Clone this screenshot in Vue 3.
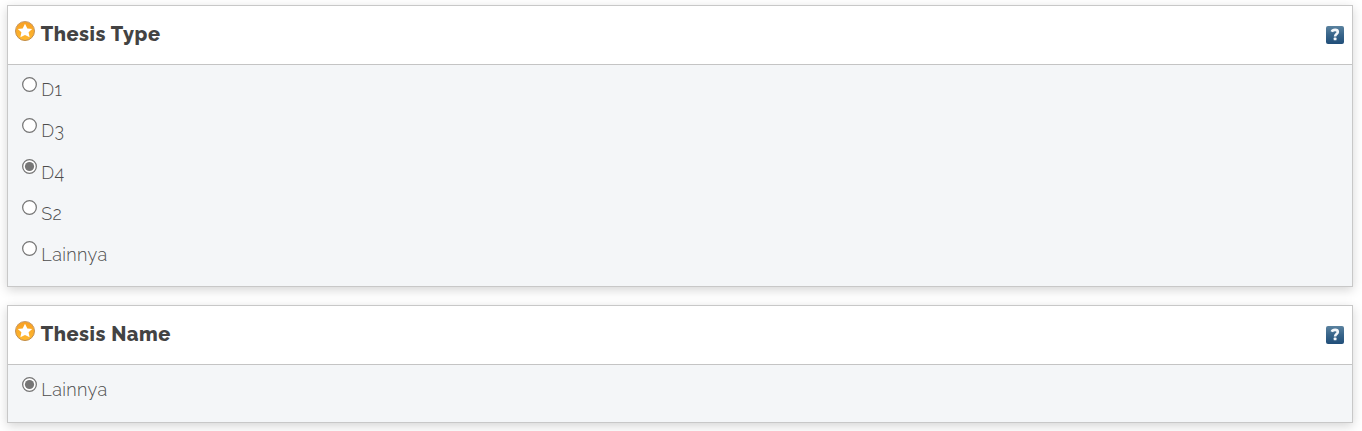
<script setup>
const panels = [
  { title: 'Thesis Type', key: 'type', selected: 2, options: ['D1', 'D3', 'D4', 'S2', 'Lainnya'] },
  { title: 'Thesis Name', key: 'name', selected: 0, options: ['Lainnya'] },
]
</script>

<template>
  <main class="page">
    <section v-for="p in panels" :key="p.key" class="panel" :class="p.key">
      <header class="head">
        <svg class="star" width="20" height="20" viewBox="0 0 20 20">
          <defs>
            <linearGradient :id="'g' + p.key" x1="0" y1="0" x2="0" y2="1">
              <stop offset="0" stop-color="#f79f22" />
              <stop offset="1" stop-color="#ffb930" />
            </linearGradient>
            <linearGradient :id="'r' + p.key" x1="0" y1="0" x2="0" y2="1">
              <stop offset="0" stop-color="#c79a6c" />
              <stop offset="1" stop-color="#c08a44" />
            </linearGradient>
          </defs>
          <circle cx="10" cy="10" r="9.5" :fill="`url(#g${p.key})`" :stroke="`url(#r${p.key})`" stroke-width="1" />
          <path d="M10 2.8 12.3 7.4 17.2 8 13.6 11.3 14.6 16.2 10 13.9 5.4 16.2 6.4 11.3 2.8 8 7.7 7.4Z" fill="#fff" />
        </svg>
        <h2 class="title">{{ p.title }}</h2>
        <svg class="help" width="18" height="18" viewBox="0 0 18 18">
          <defs>
            <linearGradient :id="'h' + p.key" x1="0" y1="0" x2="0" y2="1">
              <stop offset="0" stop-color="#5a829f" />
              <stop offset="0.5" stop-color="#386489" />
              <stop offset="1" stop-color="#204e79" />
            </linearGradient>
          </defs>
          <rect width="18" height="18" rx="2" :fill="`url(#h${p.key})`" />
          <path d="M5.8 5.7C6.6 3.4 11.8 3.1 11.8 6 11.8 8 9.1 8 9.1 10.4" fill="none" stroke="#f4f7fa" stroke-width="2.6" />
          <rect x="7.7" y="11.6" width="2.8" height="2.7" rx=".6" fill="#f4f7fa" />
        </svg>
      </header>
      <div class="body">
        <label v-for="(o, i) in p.options" :key="o" class="option">
          <svg class="radio" width="15" height="15" viewBox="0 0 15 15">
            <circle cx="7.5" cy="7.5" r="6.85" fill="#fff" stroke="#767676" stroke-width="1.25" />
            <circle v-if="i === p.selected" cx="7.5" cy="7.5" r="4.6" fill="#767676" />
          </svg>
          <span class="label">{{ o }}</span>
        </label>
      </div>
    </section>
  </main>
</template>

<style>
body {
  margin: 0;
  background: #fff;
}
</style>

<style scoped>
.page {
  height: 431px;
  box-sizing: border-box;
  padding: 5px 9px 0 7px;
  overflow: hidden;
  display: flex;
  flex-direction: column;
  gap: 18px;
  font-family: Raleway, Lato, "Open Sans", sans-serif;
}
.panel {
  box-sizing: border-box;
  flex: none;
  border: 1px solid #c8c8c8;
  background: #f4f6f8;
  box-shadow: 0 3px 10px rgba(0, 0, 0, 0.17);
}
.panel.type {
  height: 282px;
}
.panel.name {
  height: 118px;
}
.head {
  height: 58px;
  display: flex;
  align-items: flex-start;
  padding: 0 8px 0 7px;
  background: #fff;
  border-bottom: 1px solid #c4c4c4;
}
.star {
  margin-top: 15px;
  flex: none;
}
.title {
  margin: 15px 0 0 5.7px;
  flex: 1;
  font-size: 20px;
  line-height: 26px;
  font-weight: 800;
  letter-spacing: 0.55px;
  color: #434343;
  white-space: nowrap;
}
.help {
  margin-top: 20px;
  flex: none;
}
.body {
  padding: 11.6px 0 0 14px;
}
.option {
  display: flex;
  align-items: flex-start;
  height: 41.15px;
}
.radio {
  flex: none;
}
.label {
  margin: 1.68px 0 0 4.3px;
  font-size: 18px;
  line-height: 24px;
  font-weight: 300;
  letter-spacing: 0.38px;
  color: #4c4c4c;
}
</style>
